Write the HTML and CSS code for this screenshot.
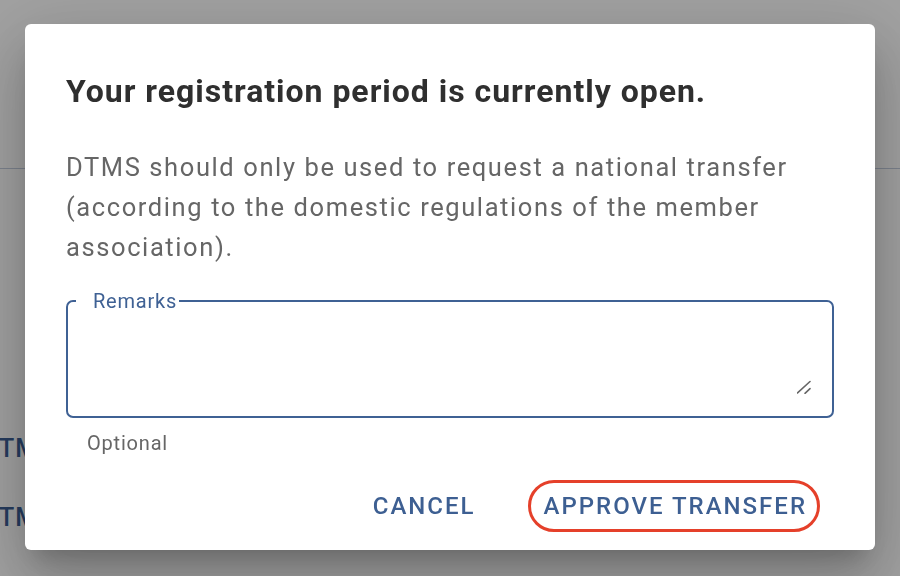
FILE: index.html
```html
<!DOCTYPE html>
<html lang="en">
<head>
<meta charset="utf-8">
<title>Approve transfer</title>
<link rel="stylesheet" href="styles.css">
</head>
<body>
<div class="page">
  <div class="page-head"></div>
  <div class="page-list">
    <div class="page-row">TMS</div>
    <div class="page-row">TMS</div>
  </div>
</div>
<div class="overlay">
  <div class="dialog" role="dialog">
    <h2 class="dialog-title">Your registration period is currently open.</h2>
    <p class="dialog-text">DTMS should only be used to request a national transfer (according to the domestic regulations of the member association).</p>
    <fieldset class="field">
      <legend class="field-label">Remarks</legend>
      <textarea class="field-input"></textarea>
      <svg class="field-grip" width="14" height="14" viewBox="0 0 14 14" aria-hidden="true">
        <path d="M0.5 13 L13 1.5 M8 13.3 L13 8.6" stroke="#666" stroke-width="1.6" stroke-linecap="round" fill="none"/>
      </svg>
    </fieldset>
    <div class="field-hint">Optional</div>
    <div class="dialog-actions">
      <button class="btn">Cancel</button>
      <button class="btn btn-marked">Approve transfer</button>
    </div>
  </div>
</div>
</body>
</html>
```
FILE: styles.css
```css
* { box-sizing: border-box; }
html, body {
  margin: 0;
  width: 900px;
  height: 576px;
  overflow: hidden;
  background: #ffffff;
  font-family: Roboto, "Liberation Sans", sans-serif;
}
.page {
  display: flex;
  flex-direction: column;
}
.page-head {
  height: 169px;
  border-bottom: 1px solid #c4cedf;
}
.page-list {
  padding-top: 265px;
  display: flex;
  flex-direction: column;
  gap: 39px;
}
.page-row {
  height: 30px;
  line-height: 30px;
  font-size: 25px;
  font-weight: 500;
  letter-spacing: 1px;
  color: #3b5e94;
  margin-left: -1px;
}
.overlay {
  position: fixed;
  inset: 0;
  background: rgba(0, 0, 0, 0.37);
  display: flex;
  justify-content: center;
  align-items: flex-start;
  padding-top: 24px;
}
.dialog {
  width: 850px;
  height: 526px;
  background: #ffffff;
  border-radius: 6px;
  padding: 47px 41px 18px;
  display: flex;
  flex-direction: column;
  box-shadow: 0 17px 23px -11px rgba(0,0,0,.2), 0 37px 59px 5px rgba(0,0,0,.14), 0 14px 71px 12px rgba(0,0,0,.12);
}
.dialog-title {
  margin: 0;
  font-size: 32px;
  line-height: 40px;
  font-weight: 700;
  color: #2f2f2f;
  letter-spacing: 0.98px;
}
.dialog-text {
  margin: 36px 0 0;
  font-size: 25.5px;
  line-height: 40px;
  font-weight: 400;
  color: #666666;
  letter-spacing: 1.6px;
}
.field {
  position: relative;
  margin: 24px 0 0;
  padding: 0 20px 19px 8px;
  border: 2px solid #3f6194;
  border-radius: 7px;
  min-width: 0;
}
.field-label {
  padding: 0 2px 0 17px;
  font-size: 20px;
  line-height: 20px;
  color: #3f6194;
  letter-spacing: 0.8px;
}
.field-input {
  display: block;
  margin-left: 17px;
  width: calc(100% - 17px);
  height: 86px;
  border: none;
  outline: none;
  padding: 0;
  resize: none;
  font: inherit;
  background: transparent;
}
.field-grip {
  position: absolute;
  right: 21px;
  bottom: 22px;
}
.field-hint {
  margin-top: 15px;
  padding-left: 21px;
  font-size: 20px;
  line-height: 20px;
  color: #666666;
  letter-spacing: 0.8px;
}
.dialog-actions {
  margin-top: auto;
  display: flex;
  justify-content: flex-end;
  align-items: center;
  gap: 39px;
  margin-right: 14px;
}
.btn {
  height: 52px;
  padding: 0 10px 0 13px;
  border: 3px solid transparent;
  border-radius: 26px;
  background: transparent;
  font-family: Roboto, "Liberation Sans", sans-serif;
  font-size: 24px;
  font-weight: 500;
  letter-spacing: 2px;
  text-transform: uppercase;
  color: #3d5f92;
}
.btn-marked {
  border-color: #e5402a;
}
```
